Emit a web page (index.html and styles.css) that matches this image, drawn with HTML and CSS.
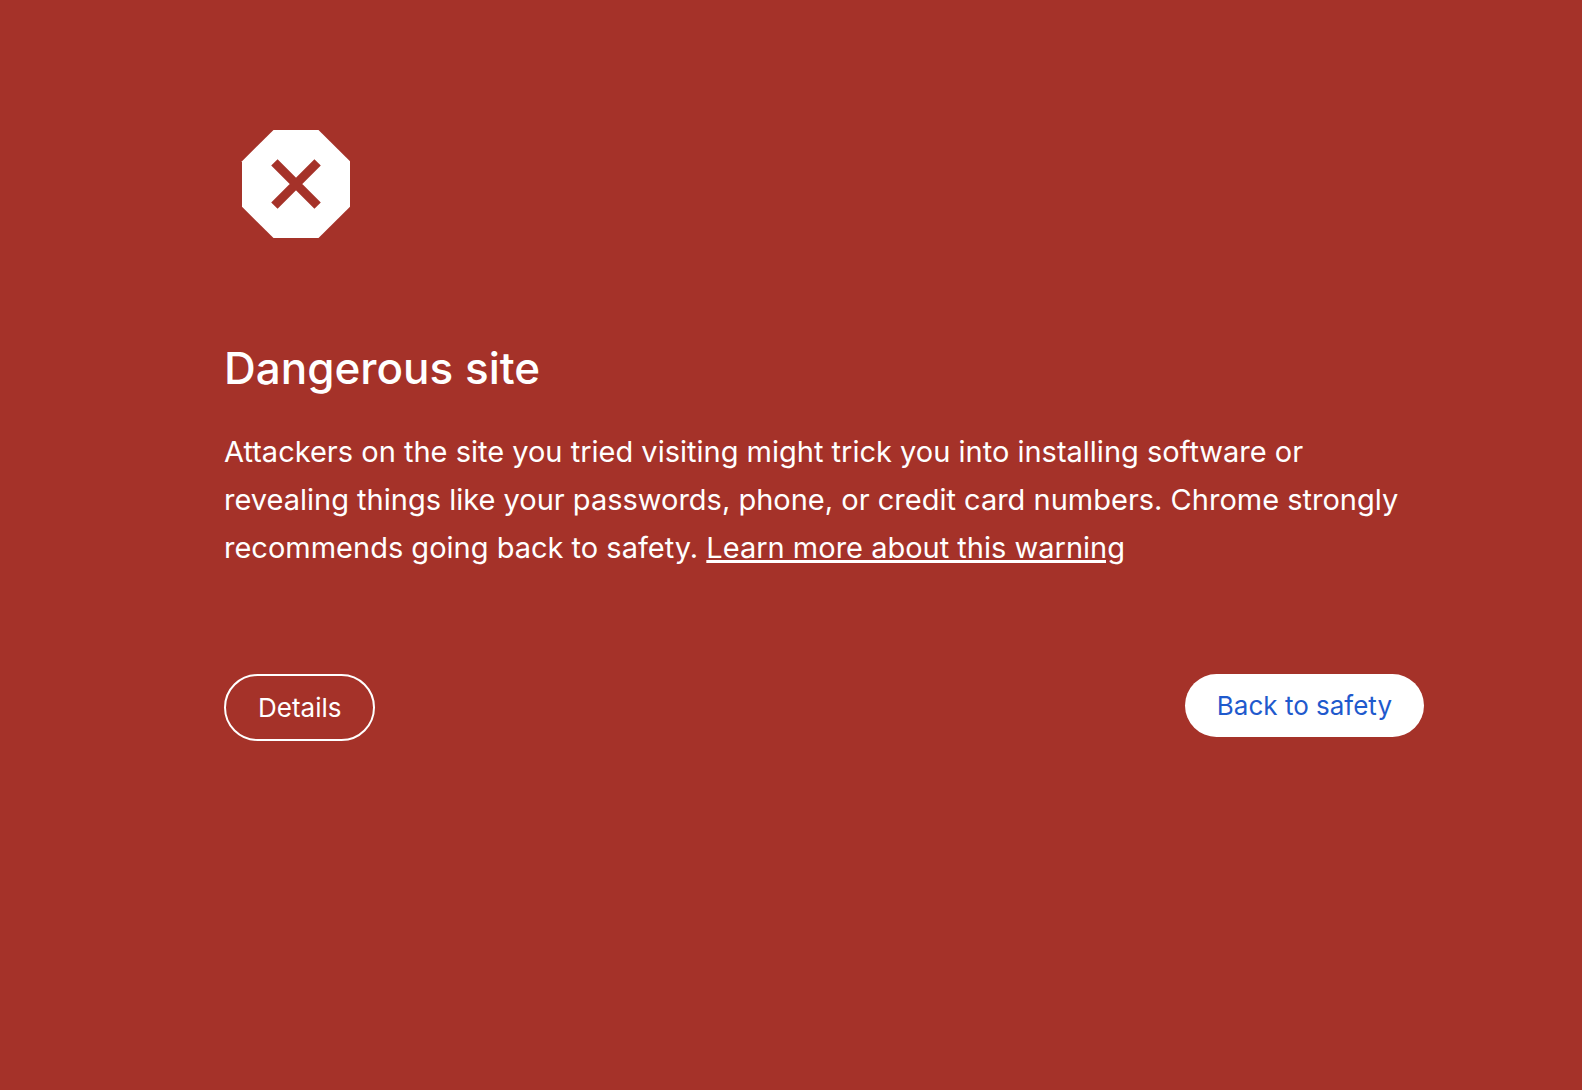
FILE: index.html
```
<!DOCTYPE html>
<html lang="en">
<head>
  <meta charset="UTF-8">
  <title>Dangerous site</title>
  <link rel="stylesheet" href="styles.css">
</head>
<body>
  <main class="interstitial">
    <svg class="icon" viewBox="0 0 24 24" aria-hidden="true">
      <path fill="#fff" d="M8.25 3h7.5L21 8.2v7.6L15.75 21h-7.5L3 15.8V8.2z"/>
      <path fill="none" stroke="#a53229" stroke-width="1.5" d="M8.4 8.4l7.2 7.2M15.6 8.4l-7.2 7.2"/>
    </svg>

    <div class="message">
      <h1>Dangerous site</h1>
      <p>Attackers on the site you tried visiting might trick you into installing software or revealing things like your passwords, phone, or credit card numbers. Chrome strongly recommends going back to safety. <a href="#">Learn more about this warning</a></p>
    </div>

    <div class="buttons">
      <button type="button" class="details">Details</button>
      <button type="button" class="primary">Back to safety</button>
    </div>
  </main>
</body>
</html>
```
FILE: styles.css
```
body {
  margin: 0;
  background: #a53229;
  color: #fff;
  font-family: Inter, sans-serif;
  font-size: 29px;
  line-height: 48px;
}
.interstitial {
  max-width: 1200px;
  margin: 0 auto;
  padding: 112px 0 0 66px;
}
.icon {
  display: block;
  width: 144px;
  height: 144px;
}
h1 {
  margin: 80px 0 28px;
  font-size: 44px;
  font-weight: 500;
  line-height: 64px;
}
p {
  margin: 0;
}
a {
  color: #fff;
  text-decoration-thickness: 3px;
}
.buttons {
  display: flex;
  justify-content: space-between;
  align-items: flex-start;
  margin-top: 102px;
}
button {
  padding: 16px 32px;
  border: none;
  border-radius: 40px;
  font-family: inherit;
  font-size: 26px;
  line-height: 31px;
  cursor: pointer;
}
.details {
  border: 2px solid #fff;
  background: none;
  color: #fff;
}
.primary {
  background: #fff;
  color: #1f5acd;
}
```
